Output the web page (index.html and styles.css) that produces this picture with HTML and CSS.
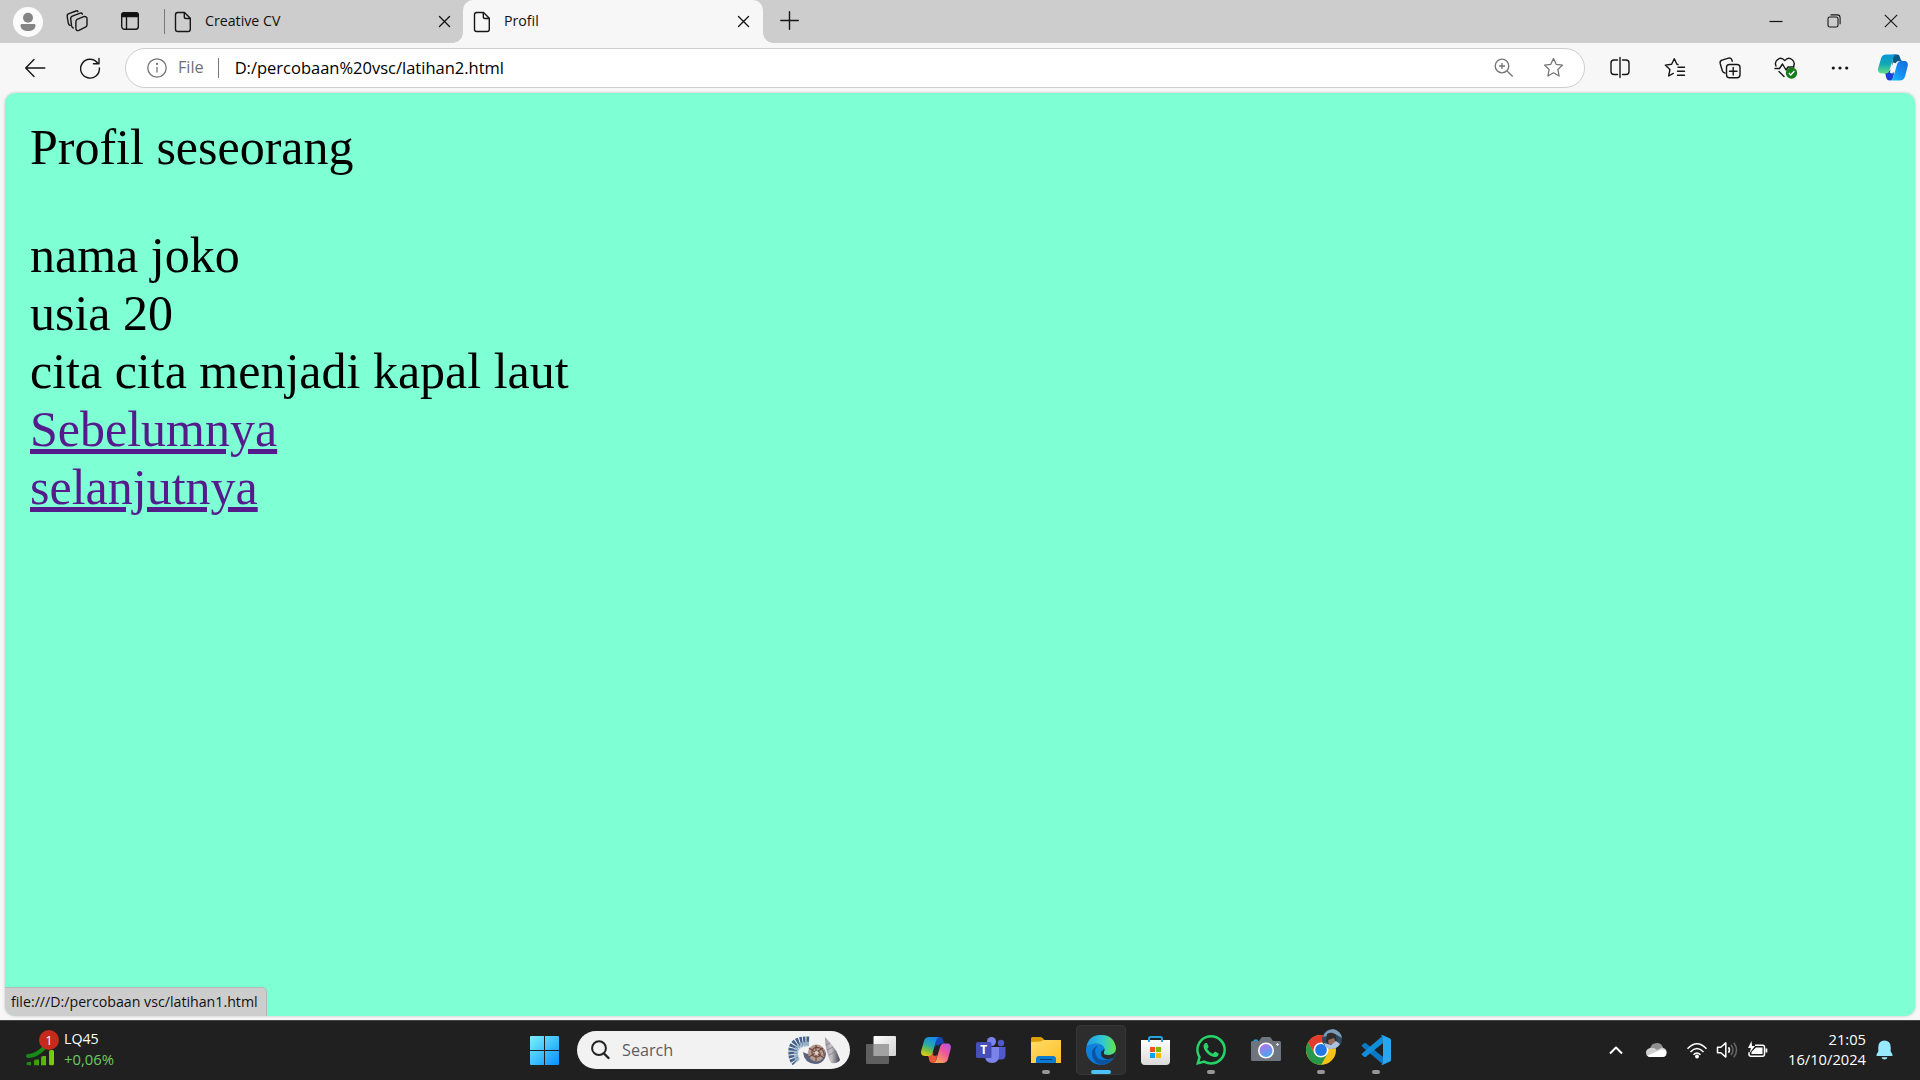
FILE: index.html
```html
<!DOCTYPE html>
<html lang="id">
<head>
<meta charset="utf-8">
<title>Profil</title>
<link rel="stylesheet" href="styles.css">
</head>
<body>
<div class="browser">
  <header class="titlebar">
    <div class="tab-tools">
      <span class="avatar"><svg width="30" height="30" viewBox="0 0 30 30"><circle cx="15" cy="15" r="15" fill="#fbfbfb"/><circle cx="15" cy="10.7" r="5" fill="#858585"/><path d="M8.5 17h13q1 0 1 1.4c0 3.6-3.5 5.6-7.500 5.600s-7.500-2-7.500-5.600q0-1.400 1-1.400z" fill="#858585"/></svg></span>
      <svg class="line workspaces" width="22" height="22" viewBox="0 0 22 22"><path d="M4 15.500c-1-.6-1.500-1.300-1.700-2.400L1.200 6.500c-.2-1.400.3-2.400 1.700-2.900L10 1c.8-.3 1.700 0 2 .7M7.200 18c-1-.4-1.500-1.200-1.700-2.300L4.700 9c-.2-1.400.4-2.400 1.700-2.900L14.300 3.200c.8-.3 1.700 0 2.100.9"/><path d="m11.700 9.200 6-2.500c1.800-.6 3.300.2 3.300 1.800v6.200c0 1.200-.5 2-1.600 2.500l-6.500 3.200c-1.700.7-3-.2-3-1.600v-7c0-1.200.6-2.100 1.800-2.600z"/></svg>
      <svg class="line tab-actions" width="20" height="20" viewBox="0 0 20 20"><rect x="1.700" y="1.700" width="16.600" height="16.600" rx="2.800"/><path d="M1.700 5.500V4.200q0-2.500 2.500-2.500h11.600q2.500 0 2.500 2.500v1.300z" fill="#111"/><path d="M6.500 6v12"/></svg>
      <span class="tool-divider"></span>
    </div>
    <div class="tab">
      <svg class="line doc" width="18" height="22" viewBox="0 0 18 22"><path d="M3.200 1.500h7.300L16.300 7.300v11q0 2.200-2.200 2.200H3.700q-2.200 0-2.200-2.200V3.700q0-2.200 2.200-2.200M10.300 1.700v4q0 1.800 1.800 1.800h4"/></svg>
      <span class="tab-title">Creative CV</span>
      <svg class="line close" width="13" height="13" viewBox="0 0 13 13"><path d="m1.500 1.500 10 10m0-10-10 10"/></svg>
    </div>
    <div class="tab active">
      <svg class="line doc" width="18" height="22" viewBox="0 0 18 22"><path d="M3.200 1.500h7.300L16.300 7.300v11q0 2.200-2.200 2.200H3.700q-2.200 0-2.200-2.200V3.700q0-2.200 2.200-2.200M10.300 1.700v4q0 1.800 1.800 1.800h4"/></svg>
      <span class="tab-title">Profil</span>
      <svg class="line close" width="13" height="13" viewBox="0 0 13 13"><path d="m1.500 1.500 10 10m0-10-10 10"/></svg>
    </div>
    <svg class="line new-tab" width="19" height="19" viewBox="0 0 19 19"><path d="M.8 9.500h17.500M9.500.8v17.500"/></svg>
    <div class="window-controls">
      <span><svg width="14" height="14" viewBox="0 0 14 14"><path d="M.5 7.500h13" stroke="#111" stroke-width="1.200"/></svg></span>
      <span><svg class="thin" width="14" height="14" viewBox="0 0 14 14"><rect x="1" y="3" width="10" height="10" rx="1.800"/><path d="M3.500.9h6.700q2.900 0 2.900 2.900v6.500"/></svg></span>
      <span><svg class="thin" width="14" height="14" viewBox="0 0 14 14"><path d="m.8.8 12.400 12.400m0-12.400L.8 13.200"/></svg></span>
    </div>
  </header>

  <nav class="toolbar">
    <span class="nav-button"><svg class="line" width="22" height="20" viewBox="0 0 22 20"><path d="M10 1.500 1.700 10l8.300 8.500M1.800 10h19"/></svg></span>
    <span class="nav-button"><svg class="line" width="22" height="22" viewBox="0 0 22 22"><path d="M18.500 6A9.400 9.400 0 1 0 20.400 11M20 1.500v5.200h-5.500"/></svg></span>
    <div class="address">
      <svg class="muted" width="20" height="20" viewBox="0 0 20 20"><circle cx="10" cy="10" r="9.200"/><path d="M10 9v5.500"/><circle cx="10" cy="6" r=".5"/></svg>
      <span class="scheme">File</span>
      <span class="address-divider"></span>
      <span class="url">D:/percobaan%20vsc/latihan2.html</span>
      <svg class="muted zoom-icon" width="20" height="20" viewBox="0 0 20 20"><circle cx="8" cy="8" r="6.800"/><path d="m13 13 5.700 5.500M8 5v6M5 8h6"/></svg>
      <svg class="muted" width="21" height="21" viewBox="0 0 21 21"><path stroke-linejoin="round" d="m10.500 1.500 2.700 5.800 6.300.8-4.600 4.400 1.200 6.500-5.600-3.200L4.900 19l1.200-6.500-4.600-4.400 6.300-.8z"/></svg>
    </div>
    <div class="actions">
      <span><svg class="line" width="20" height="21" viewBox="0 0 20 21"><path d="M7.500 3H4Q1 3 1 6v8.500q0 3 3 3h3.500M12.500 3H16q3 0 3 3v8.500q0 3-3 3h-3.500M10 .5v20"/></svg></span>
      <span><svg class="line" width="21" height="21" viewBox="0 0 21 21"><path d="m14 7.500-1.100-.2-2.600-5.600-2.700 5.600-6.300.8 4.600 4.400-1.200 6.500 4.600-2.600M14 10.200h6.500M13.500 14.300h7M13.500 18.200h7"/></svg></span>
      <span><svg class="line" width="22" height="22" viewBox="0 0 22 22"><rect x="7.500" y="7.500" width="13.500" height="13.300" rx="3"/><path d="M14.200 10.500v7.500m-3.700-3.800h7.500M6 16c-1.500-.3-2.300-1-2.700-2.300L1.200 6.500c-.4-1.700.2-2.800 1.800-3.300l6.500-2c1.700-.5 3 .2 3.500 2l.3 1"/></svg></span>
      <span class="health"><svg width="24" height="22" viewBox="0 0 24 22"><g class="line"><path d="M2 9c-1-2.200-.4-4.800 1.400-6.300C5.700.8 8.500 1 10.800 3.600 13 1 15.800.8 18.200 2.700 20 4.200 20.600 7 19.600 9M1 11.500h4.500L8.500 7l3.500 6 2-3h6M5 14.500l5 5"/></g><circle cx="17.500" cy="16" r="5.700" fill="#147c18"/><path d="m14.800 16 2 2 3.600-4" fill="none" stroke="#fff" stroke-width="1.400"/></svg></span>
      <span><svg width="18" height="6" viewBox="0 0 18 6"><g fill="#161616"><circle cx="2.300" cy="3" r="1.600"/><circle cx="9" cy="3" r="1.600"/><circle cx="15.700" cy="3" r="1.600"/></g></svg></span>
      <span><svg width="30" height="27" viewBox="0 0 30 27">
        <defs><linearGradient id="sea" x2="0" y2="1"><stop stop-color="#0796db"/><stop offset=".5" stop-color="#11a9b3"/><stop offset="1" stop-color="#65e089"/></linearGradient><linearGradient id="sky" x1="1" x2="0" y2="1"><stop stop-color="#1b68dc"/><stop offset=".5" stop-color="#168cf0"/><stop offset="1" stop-color="#17c1fb"/></linearGradient></defs>
        <path d="M15 .5h4c2 0 2.500 1.300 3 3 .6 2 1 3.500 3 3.500h-3c-2.500 0-4 .5-5 4l-3 2z" fill="#075a87"/><path d="M7 19.500 14 15l2 5c-1 3.500-1 6.500-4.300 6.500-2 0-3-1-3.500-3-.6-2.300-.2-4-2.200-4z" fill="#1641d4"/>
        <path d="M8.500.5H19c-2 0-3 1-3.700 3.300l-3.700 12.400c-.8 2-1.800 3.300-4 3.300H4c-3 0-4.500-2-3.800-5.200L3 4.500C3.700 2 5.500.5 8.500.5z" fill="url(#sea)"/><path d="M21.500 26.500H11.700c2 0 3-1.200 3.700-3.500L19 10.500c.7-2.300 2-3.500 4-3.500h3c3 0 4.500 2 3.700 5.300L27 22.500c-.8 2.500-2.500 4-5.500 4z" fill="url(#sky)"/><path d="m15.200 8.500 3.500 1.300-4.300 10-2.700-1.300z" fill="#f7f7f7"/></svg></span>
    </div>
  </nav>

  <main class="page">
    <p class="heading">Profil seseorang</p>
    <p>nama joko<br>usia 20<br>cita cita menjadi kapal laut<br><a href="#">Sebelumnya</a><br><a href="#">selanjutnya</a></p>
    <div class="status">file:///D:/percobaan vsc/latihan1.html</div>
  </main>
</div>

<footer class="taskbar">
  <div class="widget">
    <svg width="34" height="38" viewBox="0 0 34 38"><defs><linearGradient id="growth"><stop stop-color="#138211"/><stop offset="1" stop-color="#7bd50b"/></linearGradient></defs><path d="M2 26q8 0 16-8l6-5" fill="none" stroke="#168b18" stroke-width="4" stroke-linecap="round"/><path fill="url(#growth)" d="M2 32h3v3.300H2a1.500 1.500 0 0 1 0-3.300zM9.500 29.500h3.500v5.800H8V31q0-1.500 1.500-1.500zM17 26h3v9.300h-5V28q0-2 2-2zM25 20h1.500q1.500 0 1.500 1.500v12.300q0 1.500-1.500 1.500H25q-2 0-2-1.500V21.500q0-1.500 2-1.500z"/><circle cx="23" cy="10" r="10" fill="#c42b1c"/><text x="23" y="14.800" class="badge-text">1</text></svg>
    <div class="widget-text"><span>LQ45</span><span class="gain">+0,06%</span></div>
  </div>

  <div class="apps">
    <svg class="start" width="29" height="29" viewBox="0 0 29 29"><defs><linearGradient id="win" gradientUnits="userSpaceOnUse" x2="29" y2="29"><stop stop-color="#7bf2ff"/><stop offset="1" stop-color="#0790fb"/></linearGradient></defs><path fill="url(#win)" d="M1 0h13v14H0V1q0-1 1-1zM15 0h13q1 0 1 1v13H15zM0 15h14v14H1q-1 0-1-1zM15 15h14v13q0 1-1 1H15z"/></svg>
    <div class="search">
      <svg width="19" height="20" viewBox="0 0 19 20"><circle cx="8" cy="8.200" r="6.900" fill="none" stroke="#222" stroke-width="2"/><path d="m13 13.500 4.500 4.500" stroke="#222" stroke-width="2.400" stroke-linecap="round"/></svg>
      <span>Search</span>
      <svg class="shells" width="53" height="29" viewBox="0 0 53 29">
        <defs><linearGradient id="horn"><stop stop-color="#9b96a0"/><stop offset=".4" stop-color="#c9c3c7"/><stop offset="1" stop-color="#3c4052"/></linearGradient></defs>
        <path d="M21 5Q3 4 5 18q0 5 3 8" fill="none" stroke="#43618a" stroke-width="9" stroke-dasharray="2.300 .9"/><path d="M21 8Q8 8 8 17q0 5 2 8" fill="none" stroke="#96b4cb" stroke-width="4.500" stroke-dasharray="2.400 .8"/>
        <path d="M15 16q9 6 19-5 6 5 3 11-3 6-10 6-11-1-12-12z" fill="#59617c"/><circle cx="28.500" cy="17" r="8.500" fill="#b39b91"/><path d="M28 17q2-3 4 0 1 4-4 4-5-1-4-6 2-5 8-3 5 3 4 8M21 12l15 10M28 9v16M21 21l14-9" fill="none" stroke="#71473b" stroke-width="1.100"/><circle cx="28.500" cy="17" r="2" fill="#ded0c5"/>
        <path d="M37 1q12 12 15 23-3 4-9 3Q37 14 37 1z" fill="url(#horn)"/><path d="m38 9 4-2m-3 7 6-3m-4 8 8-4" stroke="#777280" stroke-width=".7"/></svg>
    </div>
    <span class="app"><svg width="30" height="30" viewBox="0 0 30 30"><defs><linearGradient id="pane" x2="1" y2="1"><stop stop-color="#fff"/><stop offset="1" stop-color="#d0d0d0"/></linearGradient></defs><rect x="7.500" y="1" width="22.500" height="20" rx="1" fill="url(#pane)"/><rect y="9" width="23" height="20" rx="1" fill="#686868" opacity=".88"/><path d="M7.500 9H23v12H7.500z" fill="#a2a2a2"/></svg></span>
    <span class="app"><svg width="30" height="28" viewBox="0 0 30 27"><defs><linearGradient id="rain" x1=".5" x2=".1" y2="1"><stop stop-color="#168bea"/><stop offset=".4" stop-color="#28aaa8"/><stop offset=".65" stop-color="#76bd45"/><stop offset="1" stop-color="#f7cf09"/></linearGradient><linearGradient id="dusk" x1="1" x2=".2" y2="1"><stop stop-color="#ac55ee"/><stop offset=".45" stop-color="#ee5798"/><stop offset="1" stop-color="#ffad56"/></linearGradient></defs>
      <path d="M15 .5h4c2 0 2.500 1.300 3 3 .6 2 1 3.500 3 3.500h-3c-2.500 0-4 .5-5 4l-3 2z" fill="#1746b9"/><path d="M7 19.500 14 15l2 5c-1 3.500-1 6.500-4.300 6.500-2 0-3-1-3.500-3-.6-2.300-.2-4-2.200-4z" fill="#ee5638"/><path d="M8.500.5H19c-2 0-3 1-3.700 3.300l-3.700 12.400c-.8 2-1.800 3.300-4 3.300H4c-3 0-4.500-2-3.800-5.200L3 4.500C3.700 2 5.500.5 8.500.5z" fill="url(#rain)"/><path d="M21.500 26.500H11.700c2 0 3-1.200 3.700-3.500L19 10.500c.7-2.300 2-3.500 4-3.500h3c3 0 4.500 2 3.700 5.300L27 22.500c-.8 2.500-2.500 4-5.500 4z" fill="url(#dusk)"/><path d="m15.200 8.500 3.500 1.300-4.300 10-2.700-1.300z" fill="#202020"/></svg></span>
    <span class="app"><svg width="30" height="28" viewBox="0 0 30 28"><circle cx="25" cy="7" r="3.200" fill="#5059c9"/><path d="M21 11h8.500v8q0 4.500-4.500 4.500h-4z" fill="#5059c9"/><circle cx="15.500" cy="5.500" r="4.500" fill="#7b83eb"/><path d="M9 11h14v9q0 7-7 7t-7-7z" fill="#7b83eb"/><rect y="6" width="15.500" height="16" rx="1.500" fill="#464eb8"/><text x="7.700" y="18" class="teams-letter">T</text></svg></span>
    <span class="app running"><svg width="30" height="28" viewBox="0 0 30 28"><defs><linearGradient id="folder" x2="1" y2="1"><stop stop-color="#ffdc69"/><stop offset="1" stop-color="#ffbf27"/></linearGradient></defs><path d="M1.500 1h8q1 0 2 1l2 2H30v8H0V2.500Q0 1 1.500 1z" fill="#dca006"/><path d="m0 6 10-.5 2.500-1.500H29q1 0 1 1v22H0z" fill="url(#folder)"/><path d="M5 27v-4q0-3 3-3h14q3 0 3 3v4z" fill="#087bd0"/><path d="M9 23.500h12" stroke="#063f71" stroke-width="1"/></svg></span>
    <span class="app running current"><svg width="30" height="30" viewBox="0 0 30 30"><defs><linearGradient id="wave"><stop stop-color="#219be0"/><stop offset=".55" stop-color="#30c7d5"/><stop offset="1" stop-color="#67e743"/></linearGradient><linearGradient id="deep" x2="0" y2="1"><stop stop-color="#1685d9"/><stop offset="1" stop-color="#0978dc"/></linearGradient></defs><circle cx="15" cy="15" r="15" fill="url(#deep)"/><path d="M9 15q0 10 9 10 5 0 9-2-4 7-12 7-9-3-9-12 0-5 6-8z" fill="#0c549f"/><path d="M27.500 23q-4 1-8-1-5-3-2-8H30q0 5-2.500 9z" fill="#292929"/><path d="M.7 11Q3 0 15 0q13 0 15 13 0 6-7 7-7 0-5-3 2-4-2-7-7-4-15 1z" fill="url(#wave)"/><path d="M18 16.500q-1 2 1 4 3 2.500 8.500 1-4 4-9 2-5-2-3-8z" fill="#292929"/></svg></span>
    <span class="app store"><svg width="29" height="30" viewBox="0 0 29 30"><defs><linearGradient id="bag" x2="0" y2="1"><stop stop-color="#fff"/><stop offset="1" stop-color="#dadada"/></linearGradient></defs><path d="M0 5h29v21q0 4-4 4H4q-4 0-4-4z" fill="url(#bag)"/><path d="M8 7V3.500Q8 2 9.500 2h10Q21 2 21 3.500V7" fill="none" stroke="#22a5df" stroke-width="2"/><path fill="#f25022" d="M9 12h5v5H9z"/><path fill="#7fba00" d="M15 12h5v5h-5z"/><path fill="#00a4ef" d="M9 18h5v5H9z"/><path fill="#ffb900" d="M15 18h5v5h-5z"/></svg></span>
    <span class="app running"><svg width="30" height="30" viewBox="0 0 24 24"><path fill="#25d366" d="M17.472 14.382c-.297-.149-1.758-.867-2.030-.967-.273-.099-.471-.148-.67.150-.197.297-.767.966-.940 1.164-.173.199-.347.223-.644.075-.297-.150-1.255-.463-2.390-1.475-.883-.788-1.480-1.761-1.653-2.059-.173-.297-.018-.458.130-.606.134-.133.298-.347.446-.520.149-.174.198-.298.298-.497.099-.198.050-.371-.025-.520-.075-.149-.669-1.612-.916-2.207-.242-.579-.487-.500-.669-.510-.173-.008-.371-.010-.570-.010-.198 0-.520.074-.792.372-.272.297-1.040 1.016-1.040 2.479 0 1.462 1.065 2.875 1.213 3.074.149.198 2.096 3.200 5.077 4.487.709.306 1.262.489 1.694.625.712.227 1.360.195 1.871.118.571-.085 1.758-.719 2.006-1.413.248-.694.248-1.289.173-1.413-.074-.124-.272-.198-.570-.347zM12.050 21.785h-.004a9.870 9.870 0 0 1-5.031-1.378l-.361-.214-3.741.982.998-3.648-.235-.374A9.860 9.860 0 0 1 12.050 2.010a9.880 9.880 0 0 1 9.889 9.885c-.003 5.450-4.437 9.890-9.889 9.890zM20.465 3.488A11.815 11.815 0 0 0 12.050 0C5.495 0 .160 5.335.157 11.892c0 2.096.547 4.142 1.588 5.945L.057 24l6.305-1.654a11.880 11.880 0 0 0 5.683 1.448h.005c6.554 0 11.890-5.335 11.893-11.893a11.820 11.820 0 0 0-3.478-8.413z"/></svg></span>
    <span class="app"><svg width="30" height="26" viewBox="0 0 30 26"><defs><linearGradient id="lens" x1=".2" x2=".7" y2="1"><stop stop-color="#b572e9"/><stop offset="1" stop-color="#43a9f2"/></linearGradient></defs><path d="M2.500 5V3.500q0-1 1-1h2.500q1 0 1 1V5z" fill="#1aa0e0"/><path d="M1.500 4H8l2-3q.5-1 2-1h6q1.500 0 2 1l2 3h6.500Q30 4 30 5.500v17q0 1.500-1.500 1.500h-27Q0 24 0 22.500v-17Q0 4 1.500 4z" fill="#6e757e"/><circle cx="15" cy="13.500" r="8" fill="#fff"/><circle cx="15" cy="13.500" r="6.500" fill="url(#lens)"/><path d="M26.500 6v3M25 7.500h3" stroke="#ddd"/></svg></span>
    <span class="app running"><svg class="chrome" width="36" height="36" viewBox="0 0 36 36"><circle cx="15" cy="21" r="15" fill="#fbc116"/><path d="M15 13.500H28Q24 6 15 6T2 13.500l6.500 11.200z" fill="#e33b2e"/><path d="M2 13.500Q-2 20 2 28.500q4 7 13 7.500l6.500-11.300-13 0z" fill="#279847"/><circle cx="15" cy="21" r="7.500" fill="#fff"/><circle cx="15" cy="21" r="5.900" fill="#2376e5"/><circle cx="26" cy="10" r="10" fill="#31475d"/><path d="M17 8q2-7 10-8 8 2 9 9l-7-4z" fill="#7b9bb6"/><path d="M21 5q5-3 9 1l1 9-6 2-5-5z" fill="#302b2d"/><path d="m22 11 6-2 2 5-7 2z" fill="#946c60"/><path d="m18 14 7 2 5-4 4 3q-3 5-9 5t-7-6z" fill="#a8c2df"/></svg></span>
    <span class="app running"><svg width="30" height="30" viewBox="0 0 30 30"><path d="m1 10 2-1.700q1-.8 2 0L22 22v7.500L1 11.500q-1-.8 0-1.500z" fill="#087ac5"/><path d="m1 20 2 1.700q1 .8 2 0L22 8V.5L1 18.500q-1 .8 0 1.500z" fill="#118dd8"/><path d="m22 .3 7 3.200q1 .5 1 1.500v20q0 1-1 1.500l-7 3.200q-1.500.3-2.500-.7 1.500.7 2.500-1V2Q21 .5 19.500 1q1-1 2.500-.7z" fill="#2aa5f1"/></svg></span>
  </div>

  <div class="tray">
    <svg class="glyph chevron" width="16" height="10" viewBox="0 0 16 10"><path d="m2 8.500 6-6 6 6"/></svg>
    <svg class="cloud" width="21" height="14" viewBox="0 0 21 14"><path d="M4 6q1-6 7-6 5 0 6 5l-5 4z" fill="#8f8f8f"/><path d="M4 5q4-1 7 2l5-2.500q5 1 4.500 5Q20 14 16 14H4Q0 13.500 0 9.500 0 6 4 5z" fill="#d0d0d0"/><path d="m1.500 12.500 14-6q5 0 5 3.500 0 4-4.500 4H4q-1.500 0-2.500-1.500z" fill="#fff"/></svg>
    <svg class="glyph wifi" width="22" height="17" viewBox="0 0 22 17"><path d="M1.500 6.800q9.500-10 19 0M4.500 10q6.500-6.800 13 0M7.500 12.800q3.500-3.700 7 0"/><circle cx="11" cy="14.500" r="1.200" fill="#fff"/></svg>
    <svg class="glyph speaker" width="22" height="18" viewBox="0 0 22 18"><path d="M1.500 6.200h3.300l5-4.300v14.200l-5-4.300H1.500z"/><path d="M12.500 6.200q2 2.800 0 5.600"/><path d="M15 4q4 5 0 10M17.800 1.800q5.500 7.200 0 14.400" stroke="#666"/></svg>
    <svg class="glyph battery" width="21" height="18" viewBox="0 0 21 18"><path d="M8 4.200h7.500q2 0 2 2V13q0 2.300-2 2.300H4q-2 0-2-2v-2"/><path d="M9 6.500h6.500V13H4.500v-2z" fill="#fff" stroke="none"/><path d="M18.500 7.500h1.800v4h-1.800" fill="#fff" stroke="none"/><path d="M4.500 0 1 7h3l-1.500 5L8 5H5z" fill="#fff" stroke="none"/></svg>
    <div class="clock"><span>21:05</span><span>16/10/2024</span></div>
    <svg class="bell" width="17" height="20" viewBox="0 0 17 20"><path d="M8.500.5q6 0 6.200 6.500v4.500l1.800 3q.5 1.500-1 1.500h-14q-1.500 0-1-1.500l1.800-3V7Q2.500.5 8.500.5zM5.500 17.200h6q-.7 2.300-3 2.300t-3-2.300z" fill="#98e8ff"/></svg>
  </div>
</footer>
</body>
</html>
```
FILE: styles.css
```css
* { box-sizing: border-box; }
html, body { margin: 0; height: 100%; overflow: hidden; }
body {
  display: flex;
  flex-direction: column;
  font-family: "Open Sans", "Noto Sans", sans-serif;
  font-size: 14.2px;
  color: #111;
}
svg { display: block; flex: none; overflow: visible; }
.browser { height: 1020px; flex: none; display: flex; flex-direction: column; background: #f7f7f7; }

.line { fill: none; stroke: #161616; stroke-width: 1.400; stroke-linecap: round; stroke-linejoin: round; }
.thin { fill: none; stroke: #161616; stroke-width: 1.100; }
.muted { fill: none; stroke: #747474; stroke-width: 1.300; }

/* Title bar */
.titlebar { height: 43px; flex: none; display: flex; align-items: center; background: #cdcdcd; }
.tab-tools { width: 165px; flex: none; display: flex; align-items: center; padding-left: 13px; }
.workspaces { margin: -1px 0 0 23px; }
.tab-actions { margin: -1px 0 0 32px; }
.tool-divider { width: 1px; height: 25px; margin-left: auto; background: #787878; }
.tab { height: 43px; width: 298px; padding: 0 12px 0 9px; display: flex; align-items: center; }
.tab-title { margin: -3px auto 0 13px; }
.tab.active {
  position: relative;
  width: 300px;
  padding: 0 13px 0 10px;
  border-radius: 10px 10px 0 0;
  background: #f7f7f7;
}
.active::before, .active::after { content: ""; position: absolute; bottom: 0; width: 10px; height: 10px; }
.active::before { left: -10px; background: radial-gradient(circle at 0 0, transparent 9.500px, #f7f7f7 10px); }
.active::after { right: -10px; background: radial-gradient(circle at 100% 0, transparent 9.500px, #f7f7f7 10px); }
.new-tab { margin-left: 17px; margin-top: -2px; }
.window-controls { margin-left: auto; margin-top: -1px; display: flex; }
.window-controls span { width: 57.500px; display: flex; justify-content: center; }

/* Toolbar */
.toolbar { height: 50px; flex: none; display: flex; align-items: center; padding-left: 7px; }
.nav-button { width: 55px; display: flex; justify-content: center; padding-bottom: 1px; }
.address {
  width: 1460px;
  height: 40px;
  margin-left: 8px;
  padding: 0 20px 1px 21px;
  display: flex;
  align-items: center;
  border: 1px solid #cecece;
  border-radius: 20px;
  background: #fff;
}
.scheme { margin: -1px 0 0 11px; font-size: 16.200px; color: #707070; }
.address-divider { width: 1px; height: 20px; margin: 0 16px 0 14px; background: #777; }
.url { margin-top: -1px; font-size: 16.500px; color: #000; }
.zoom-icon { margin-left: auto; margin-right: 29px; }
.actions { display: flex; margin-left: 7px; }
.actions span { width: 55px; height: 27px; display: flex; align-items: center; justify-content: center; padding-bottom: 1px; }
.actions .health { padding-left: 2px; }
.actions span:last-child { width: 51px; }

/* Page viewport */
.page {
  position: relative;
  flex: none;
  width: 1910px;
  height: 923px;
  margin-left: 5px;
  padding: 25px;
  overflow: hidden;
  border-radius: 10px;
  background: #7fffd4;
  box-shadow: 0 0 3px #bbb;
  color: #000;
  font: 50px/58px "Liberation Serif", serif;
}
.page p { margin: 0; }
.page .heading { margin: 0 0 50px; }
.page a { color: #551a8b; text-decoration-thickness: 5px; }
.status {
  position: absolute;
  left: 0;
  bottom: 0;
  width: 262px;
  height: 29px;
  padding-left: 6px;
  border-top: 1px solid #b5b5b5;
  border-right: 1px solid #b5b5b5;
  border-radius: 0 5px 0 0;
  background: #cdcdcd;
  font: 14.200px/27px "Open Sans", sans-serif;
  color: #111;
}

/* Taskbar */
.taskbar {
  height: 60px;
  flex: none;
  display: flex;
  align-items: center;
  padding-bottom: 1px;
  background: #202020;
  border-top: 1px solid #454545;
  color: #fff;
}
.widget { width: 530px; display: flex; align-items: center; padding-left: 26px; }
.widget > svg { margin-top: -2px; }
.widget-text { display: flex; flex-direction: column; margin: -2px 0 0 4px; line-height: 20px; }
.gain { font-size: 14.800px; color: #6ccb5f; }
.badge-text { font-size: 13px; fill: #fff; text-anchor: middle; }
.teams-letter { font-size: 12px; font-weight: 700; fill: #fff; text-anchor: middle; }
.apps { display: flex; align-items: center; }
.search {
  width: 273px;
  height: 38px;
  margin: 0 3px 0 18px;
  padding: 0 9px 0 14px;
  display: flex;
  align-items: center;
  border-radius: 19px;
  background: #f2f2f2;
}
.search span { margin: 0 auto 0 12px; font-size: 16.200px; color: #5d5d5d; }
.app {
  position: relative;
  width: 50px;
  height: 50px;
  margin: 0 2.550px;
  display: flex;
  align-items: center;
  justify-content: center;
}
.running::after {
  content: "";
  position: absolute;
  left: 21px;
  bottom: 1px;
  width: 8px;
  height: 4px;
  border-radius: 2px;
  background: #969696;
}
.store { padding-right: 2px; }
.current { border-radius: 5px; background: #2d2d2d; box-shadow: inset 0 0 0 1px #373737; }
.current::after { left: 15px; width: 20px; background: #4cc2ff; }
.chrome { margin: -6px 0 0 6px; }
.tray { margin-left: auto; display: flex; align-items: center; padding-right: 27px; }
.glyph { fill: none; stroke: #fff; stroke-width: 1.500; stroke-linejoin: round; }
.chevron { stroke-width: 2; margin-right: 22px; }
.cloud { margin-right: 19px; }
.wifi { margin-right: 8px; }
.speaker { margin-right: 9px; }
.clock {
  width: 98px;
  margin-top: -2px;
  display: flex;
  flex-direction: column;
  align-items: flex-end;
  line-height: 20px;
  font-size: 14.700px;
}
.bell { margin-left: 10px; }
```
